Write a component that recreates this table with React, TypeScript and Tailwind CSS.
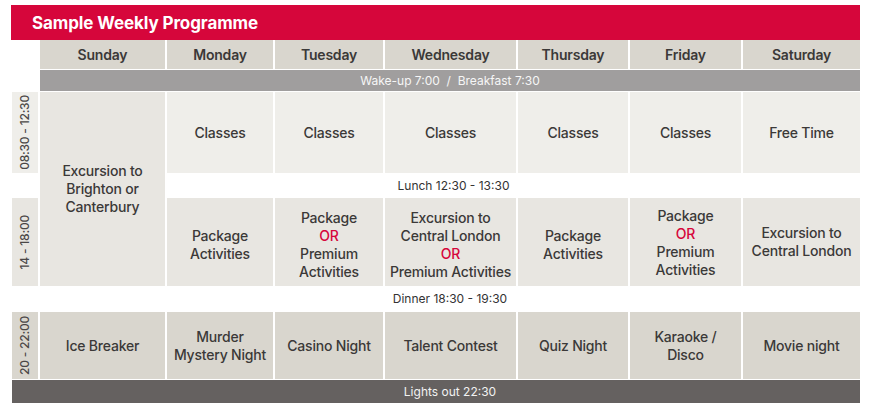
const days = ["Sunday", "Monday", "Tuesday", "Wednesday", "Thursday", "Friday", "Saturday"];

function Or() {
  return <span className="block text-[#d6063b]">OR</span>;
}

function SideLabel({ text, bg }: { text: string; bg: string }) {
  return (
    <div className={`flex items-center justify-center ${bg}`}>
      <span className="rotate-180 text-[12px] leading-none text-[#4a4746] [writing-mode:vertical-rl]">{text}</span>
    </div>
  );
}

function Cell({ children, bg, className = "" }: { children: React.ReactNode; bg: string; className?: string }) {
  return (
    <div className={`flex items-center justify-center text-center ${bg} ${className}`}>
      <div>{children}</div>
    </div>
  );
}

export default function App() {
  const light = "bg-[#efeeea]";
  const mid = "bg-[#e8e6e1]";
  const dark = "bg-[#d9d6ce]";

  return (
    <div className="h-[409px] w-[881px] bg-white pt-[5px] font-['Inter',sans-serif] text-[14px] font-medium leading-[18px] tracking-[-0.2px] text-[#3b3938]">
      <div className="ml-[11px] flex h-[35px] w-[849px] items-center bg-[#d6063b] pl-[21px]">
        <h1 className="text-[17px] font-bold tracking-[-0.1px] text-white">Sample Weekly Programme</h1>
      </div>

      <div className="ml-[12px] grid w-[848px] grid-cols-[26px_125px_106px_108px_131px_110px_111px_117px] grid-rows-[29px_21px_81px_23px_88px_24px_67px_23px] gap-x-[2px] gap-y-[1px]">
        {/* header */}
        <div />
        {days.map((d) => (
          <div key={d} className={`flex items-center justify-center font-semibold ${dark}`}>
            {d}
          </div>
        ))}

        {/* wake up */}
        <div />
        <div className="col-span-7 flex items-center justify-center bg-[#a09e9e] text-[12px] font-normal tracking-normal text-[#f6f6f6]">
          Wake-up 7:00&nbsp; /&nbsp; Breakfast 7:30
        </div>

        {/* morning */}
        <SideLabel text="08:30 - 12:30" bg={light} />
        <Cell bg={mid} className="row-span-3">
          Excursion to
          <br />
          Brighton or
          <br />
          Canterbury
        </Cell>
        <Cell bg={light} className="pt-[1px]">Classes</Cell>
        <Cell bg={light} className="pt-[1px]">Classes</Cell>
        <Cell bg={light} className="pt-[1px]">Classes</Cell>
        <Cell bg={light} className="pt-[1px]">Classes</Cell>
        <Cell bg={light} className="pt-[1px]">Classes</Cell>
        <Cell bg={light} className="pt-[1px]">Free Time</Cell>

        {/* lunch */}
        <div />
        <div className="col-span-6 flex items-center justify-center pr-[120px] text-[12px] font-normal tracking-normal text-[#333]">
          Lunch 12:30 - 13:30
        </div>

        {/* afternoon */}
        <SideLabel text="14 - 18:00" bg={mid} />
        <Cell bg={mid} className="pt-[5px]">
          Package
          <br />
          Activities
        </Cell>
        <Cell bg={mid} className="pt-[5px]">
          Package
          <Or />
          Premium
          <br />
          Activities
        </Cell>
        <Cell bg={mid} className="pt-[5px]">
          Excursion to
          <br />
          Central London
          <Or />
          Premium Activities
        </Cell>
        <Cell bg={mid} className="pt-[5px]">
          Package
          <br />
          Activities
        </Cell>
        <Cell bg={mid} className="pt-[1px]">
          Package
          <Or />
          Premium
          <br />
          Activities
        </Cell>
        <Cell bg={mid}>
          Excursion to
          <br />
          Central London
        </Cell>

        {/* dinner */}
        <div />
        <div className="col-span-7 flex items-center justify-center text-[12px] font-normal tracking-normal text-[#333]">
          Dinner 18:30 - 19:30
        </div>

        {/* evening */}
        <SideLabel text="20 - 22:00" bg={dark} />
        <Cell bg={dark}>Ice Breaker</Cell>
        <Cell bg={dark}>
          Murder
          <br />
          Mystery Night
        </Cell>
        <Cell bg={dark}>Casino Night</Cell>
        <Cell bg={dark}>Talent Contest</Cell>
        <Cell bg={dark}>Quiz Night</Cell>
        <Cell bg={dark}>
          Karaoke /
          <br />
          Disco
        </Cell>
        <Cell bg={dark}>Movie night</Cell>

        {/* lights out */}
        <div className="col-span-8 flex items-center justify-center bg-[#656160] pl-[28px] text-[12px] font-normal tracking-normal text-[#f2f2f2]">
          Lights out 22:30
        </div>
      </div>
    </div>
  );
}
